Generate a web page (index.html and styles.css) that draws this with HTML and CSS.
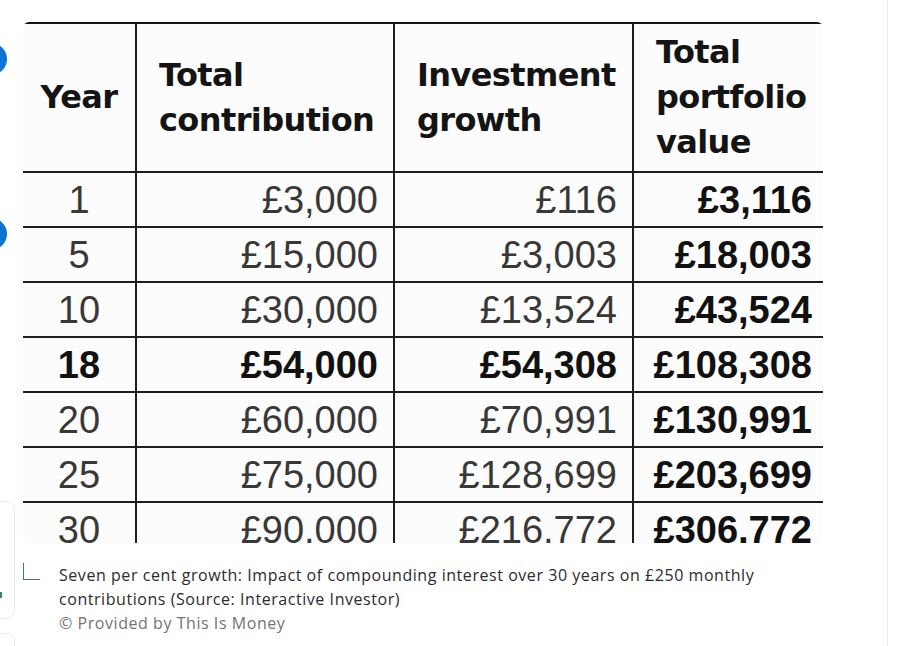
FILE: index.html
```html
<!DOCTYPE html>
<html lang="en">
<head>
<meta charset="utf-8">
<title>Seven per cent growth</title>
<link rel="stylesheet" href="styles.css">
</head>
<body>
<div class="page">
  <span class="dot dot-1"></span>
  <span class="dot dot-2"></span>
  <div class="side-card side-card-1"><span class="side-glyph"></span></div>
  <div class="side-card side-card-2"></div>

  <figure class="figure">
    <div class="shot">
      <div class="grid">
        <div class="cell head yr">Year</div>
        <div class="cell head">Total<br>contribution</div>
        <div class="cell head">Investment<br>growth</div>
        <div class="cell head last">Total<br>portfolio<br>value</div>

        <div class="cell yr">1</div>
        <div class="cell">£3,000</div>
        <div class="cell">£116</div>
        <div class="cell b last">£3,116</div>

        <div class="cell yr">5</div>
        <div class="cell">£15,000</div>
        <div class="cell">£3,003</div>
        <div class="cell b last">£18,003</div>

        <div class="cell yr">10</div>
        <div class="cell">£30,000</div>
        <div class="cell">£13,524</div>
        <div class="cell b last">£43,524</div>

        <div class="cell yr b">18</div>
        <div class="cell b">£54,000</div>
        <div class="cell b">£54,308</div>
        <div class="cell b last">£108,308</div>

        <div class="cell yr">20</div>
        <div class="cell">£60,000</div>
        <div class="cell">£70,991</div>
        <div class="cell b last">£130,991</div>

        <div class="cell yr">25</div>
        <div class="cell">£75,000</div>
        <div class="cell">£128,699</div>
        <div class="cell b last">£203,699</div>

        <div class="cell yr">30</div>
        <div class="cell">£90,000</div>
        <div class="cell">£216,772</div>
        <div class="cell b last">£306,772</div>
      </div>
    </div>
    <figcaption class="caption">
      <span class="corner"></span>
      <div class="caption-text">
        <p class="desc">Seven per cent growth: Impact of compounding interest over 30 years on £250 monthly contributions (Source: Interactive Investor)</p>
        <p class="credit">© Provided by This Is Money</p>
      </div>
    </figcaption>
  </figure>
</div>
</body>
</html>
```
FILE: styles.css
```css
html, body {
  margin: 0;
  padding: 0;
  background: #ffffff;
}

body {
  width: 897px;
  height: 646px;
  overflow: hidden;
}

.page {
  position: relative;
  width: 887px;
  height: 646px;
  overflow: hidden;
  border-right: 1px solid #ececec;
}

/* partially visible overlays at the left edge */
.dot {
  position: absolute;
  left: -25px;
  width: 32px;
  height: 32px;
  border-radius: 50%;
  background: #0b74d6;
}
.dot-1 { top: 43px; }
.dot-2 { top: 218px; }

.side-card {
  position: absolute;
  left: -100px;
  width: 114px;
  border-radius: 8px;
  background: #ffffff;
  box-shadow: 0 0 0 1px #ececec, 0 1px 3px rgba(0, 0, 0, 0.06);
}
.side-card-1 { top: 502px; height: 116px; }
.side-card-2 { top: 634px; height: 12px; border-radius: 8px 8px 0 0; }

.side-glyph {
  position: absolute;
  right: 12px;
  top: 90px;
  width: 2px;
  height: 6px;
  background: #2e8b57;
}

.figure {
  margin: 0;
  padding: 22px 0 0 23px;
}

.shot {
  width: 800px;
  height: 521px;
  overflow: hidden;
  border-radius: 6px;
  background: #fcfcfc;
}

.grid {
  display: grid;
  grid-template-columns: 114px 258px 239px 210px;
  grid-template-rows: 149px;
  grid-auto-rows: 55px;
  width: 821px;
  border-top: 2px solid #141414;
}

.cell {
  box-sizing: border-box;
  display: flex;
  align-items: center;
  justify-content: flex-end;
  padding-right: 15px;
  border-right: 2px solid #1e1e1e;
  border-bottom: 2px solid #1e1e1e;
  font-family: "Liberation Sans", Arial, sans-serif;
  font-size: 38px;
  line-height: 1;
  color: #383838;
  white-space: nowrap;
}

.cell.last {
  padding-right: 30px;
}

.cell.b {
  font-weight: bold;
  color: #111111;
}

.cell.yr {
  justify-content: center;
  padding: 0;
}

.cell.head {
  justify-content: flex-start;
  padding: 0 0 0 22px;
  font-family: "DejaVu Sans", Verdana, sans-serif;
  font-weight: bold;
  font-size: 32px;
  line-height: 45px;
  color: #141414;
  letter-spacing: -0.6px;
}

.cell.head.yr {
  justify-content: center;
  padding: 0;
}

.caption {
  display: flex;
  gap: 19px;
  margin-top: 20px;
}

.corner {
  flex: none;
  width: 16px;
  height: 16px;
  border-left: 1px solid #3b72ad;
  border-bottom: 1px solid #3b72ad;
}

.caption-text {
  width: 764px;
  font-family: "Open Sans", "Noto Sans", sans-serif;
  font-size: 16px;
  letter-spacing: 0.55px;
  line-height: 24px;
  color: #2b2b2b;
}

.caption-text p {
  margin: 0;
}

.credit {
  color: #737373;
}
```
